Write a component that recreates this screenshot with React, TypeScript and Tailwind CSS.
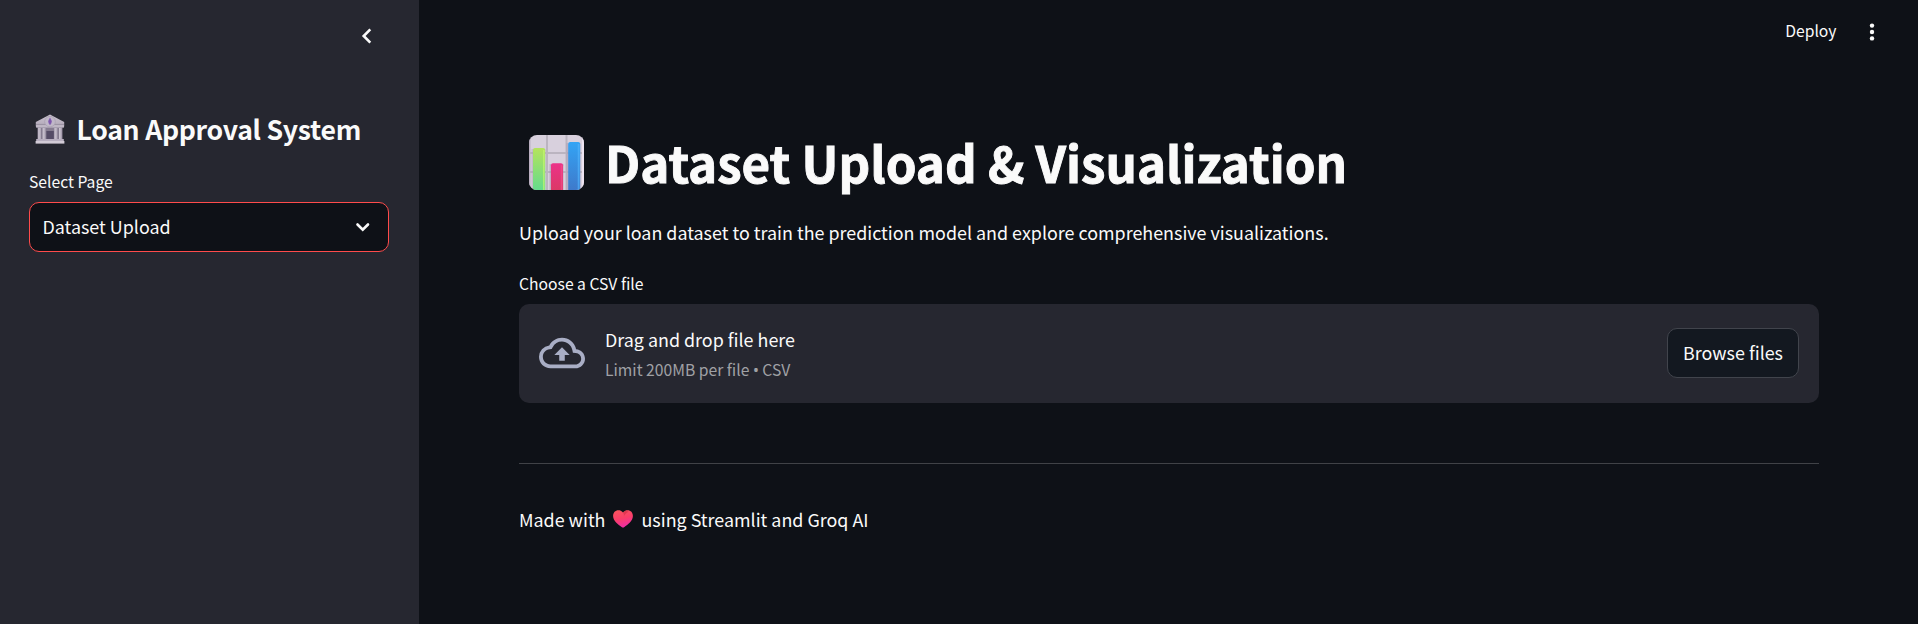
function BankIcon() {
  return (
    <svg className="block h-[30px] w-[30px] shrink-0" viewBox="0 0 30 30">
      <defs>
        <linearGradient id="bankRoof" x1="0" y1="0" x2="0" y2="1">
          <stop offset="0" stopColor="#c9c1ce" />
          <stop offset="1" stopColor="#b3aaba" />
        </linearGradient>
        <linearGradient id="bankColumn" x1="0" y1="0" x2="1" y2="0">
          <stop offset="0" stopColor="#cfc8d4" />
          <stop offset="1" stopColor="#aca3b4" />
        </linearGradient>
      </defs>
      <rect x="2.5" y="13" width="25" height="13" fill="#857c90" />
      <path d="M15 .6 29.2 8v4.4H.8V8z" fill="url(#bankRoof)" />
      <path d="M1 10.4h28" stroke="#8d8497" strokeWidth=".7" />
      <rect x="1" y="11.2" width="28" height="2.4" fill="#bfb7c5" />
      <rect x="11.4" y="17" width="7.4" height="9" fill="#554c66" />
      <g fill="url(#bankColumn)">
        <rect x="3.2" y="14" width="2.8" height="11.5" />
        <rect x="7.6" y="14" width="3" height="11.5" />
        <rect x="19.4" y="14" width="3" height="11.5" />
        <rect x="24" y="14" width="2.8" height="11.5" />
      </g>
      <rect x="1.2" y="25" width="27.6" height="2.4" fill="#b7aebf" />
      <rect x=".6" y="27" width="28.8" height="2.6" fill="#d2cbd6" />
      <circle cx="15" cy="7.6" r="5.3" fill="#c0b8c8" stroke="#a29aab" strokeWidth=".6" />
      <ellipse cx="15" cy="7.4" rx="1.8" ry="2.5" fill="#8560b4" />
      <path d="M15 3.9v7" stroke="#7650a8" strokeWidth="1" />
    </svg>
  );
}

function ChartIcon() {
  return (
    <svg className="block h-[55px] w-[55px] shrink-0" viewBox="0 0 55 55">
      <defs>
        <linearGradient id="barGreen" x1="0" y1="0" x2="0" y2="1">
          <stop offset="0" stopColor="#b5e35c" />
          <stop offset="1" stopColor="#5fdb90" />
        </linearGradient>
        <linearGradient id="barPink" x1="0" y1="0" x2="0" y2="1">
          <stop offset="0" stopColor="#ec3289" />
          <stop offset="1" stopColor="#d93a62" />
        </linearGradient>
        <linearGradient id="barBlue" x1="0" y1="0" x2="0" y2="1">
          <stop offset="0" stopColor="#33a4f5" />
          <stop offset="1" stopColor="#3f78c9" />
        </linearGradient>
        <clipPath id="chartFrame">
          <rect width="55" height="55" rx="8" />
        </clipPath>
      </defs>
      <g clipPath="url(#chartFrame)">
        <rect width="55" height="55" fill="#d8d0dd" />
        <path d="M18 0v55M37.5 0v55M0 18h55M0 37h55" stroke="#bbb4c0" strokeWidth="2" />
        <path d="M.7 0v55" stroke="#b9aebf" strokeWidth="1.5" />
        <path d="M54 0v55" stroke="#eee4f1" strokeWidth="2" />
        <rect x="2.5" y="14" width="14" height="44" fill="#a99bb0" opacity=".4" />
        <rect x="20.5" y="29" width="14" height="29" fill="#a58cac" opacity=".5" />
        <rect x="37.5" y="8" width="14" height="50" fill="#a091b0" opacity=".4" />
        <rect x="4" y="13" width="12.2" height="45" rx="2" fill="url(#barGreen)" />
        <path d="M14.8 15v40" stroke="#c3f76e" strokeWidth="1.6" opacity=".7" />
        <rect x="22" y="28.2" width="12" height="30" rx="2" fill="url(#barPink)" />
        <path d="M32.6 30v25" stroke="#f0508b" strokeWidth="1.8" opacity=".7" />
        <rect x="39.2" y="7" width="12" height="50" rx="2" fill="url(#barBlue)" />
        <path d="M49.6 9v46" stroke="#51b3fb" strokeWidth="1.8" opacity=".7" />
      </g>
    </svg>
  );
}

function HeartIcon() {
  return (
    <svg className="block h-[18px] w-[20px] shrink-0" viewBox="0 0 20 18">
      <defs>
        <linearGradient id="heartFill" x1="0.2" y1="0" x2="0.5" y2="1">
          <stop offset="0" stopColor="#f9545e" />
          <stop offset=".5" stopColor="#fa3e69" />
          <stop offset="1" stopColor="#ee2da6" />
        </linearGradient>
      </defs>
      <path
        d="M10 2.5C8.6.9 7 .3 5.4.3 2.3.3.1 2.7.1 5.9c0 5 5.2 8.6 8.5 11.1.9.7 1.9.7 2.8 0 3.3-2.5 8.5-6.1 8.5-11.1C19.9 2.7 17.7.3 14.6.3 13 .3 11.4.9 10 2.5z"
        fill="url(#heartFill)"
      />
      <path d="M10 2.5c1.2 1.7 1.2 3 .6 4.2C11.5 5 13 3 15.5 1.8 13.5.3 11.4.9 10 2.5z" fill="#d02c45" opacity=".6" />
    </svg>
  );
}

function Sidebar() {
  return (
    <aside className="flex w-[419px] shrink-0 flex-col bg-[#262730] px-[29px]">
      <div className="flex h-[72px] items-center justify-end pr-[13px]">
        <svg className="block h-5 w-5" viewBox="0 0 20 20" fill="none" stroke="#fafafa" strokeWidth="2.6">
          <path d="M13.3 3.3 6.7 10l6.6 6.7" />
        </svg>
      </div>
      <h2 className="mt-[37px] flex h-10 items-center whitespace-nowrap pl-[5.5px] text-[26.6px] font-semibold leading-10 tracking-[-0.28px]">
        <BankIcon />
        <span className="ml-3">Loan Approval System</span>
      </h2>
      <label className="mt-[21px] h-6 text-[15.7px] leading-6">Select Page</label>
      <div className="mt-2 flex h-[50px] w-[360px] items-center justify-between rounded-[10px] border border-[#ff4b4b] bg-[#0e1117] pl-[12.5px] pr-[15px] text-[17.9px] leading-[30px]">
        <span className="pb-0.5">Dataset Upload</span>
        <svg className="block h-5 w-5" viewBox="0 0 20 20" fill="none" stroke="#fafafa" strokeWidth="2.6" strokeLinecap="round">
          <path d="m4.5 7.5 5.25 5.25L15 7.5" />
        </svg>
      </div>
    </aside>
  );
}

function Uploader() {
  return (
    <section className="mt-2 flex h-[99px] items-center rounded-[10px] bg-[#262730] px-5">
      <svg className="mb-px block h-[46px] w-[46px] shrink-0" viewBox="0 0 24 24" fill="#a9aec5">
        <path d="M19.35 10.04A7.49 7.49 0 0 0 12 4C9.11 4 6.6 5.64 5.35 8.04A5.994 5.994 0 0 0 0 14c0 3.31 2.69 6 6 6h13c2.76 0 5-2.24 5-5 0-2.64-2.05-4.78-4.65-4.96zM19 18H6c-2.21 0-4-1.79-4-4 0-2.05 1.53-3.76 3.56-3.97l1.07-.11.5-.95A5.469 5.469 0 0 1 12 6c2.62 0 4.88 1.86 5.39 4.43l.3 1.5 1.53.11A2.98 2.98 0 0 1 22 15c0 1.65-1.35 3-3 3zM8 13h2.55v3h2.9v-3H16l-4-4z" />
      </svg>
      <div className="ml-5 flex flex-1 flex-col gap-[5px]">
        <span className="h-7 text-[17.9px] leading-7">Drag and drop file here</span>
        <span className="h-6 text-[15.7px] leading-6 text-[#a0a1a5]">
          Limit 200MB per file <span className="font-['Noto_Sans'] leading-none">•</span> CSV
        </span>
      </div>
      <button className="mb-px flex h-[50px] w-[132px] items-center justify-center rounded-[10px] border border-[#41444c] bg-[#131820] pb-0.5 text-[17.9px] leading-[30px]">
        Browse files
      </button>
    </section>
  );
}

export default function App() {
  return (
    <div className="flex h-[624px] w-[1918px] overflow-hidden bg-[#0e1117] font-['Noto_Sans_CJK_SC',sans-serif] text-[#fafafa]">
      <Sidebar />
      <main className="flex flex-1 flex-col">
        <header className="flex h-[60px] items-center justify-end pr-[41.5px] text-[15.7px]">
          <span className="pt-0.5 leading-6">Deploy</span>
          <svg className="ml-[30px] mt-[3px] block h-[18px] w-[10px]" viewBox="0 0 10 18" fill="#fafafa">
            <circle cx="5" cy="2.6" r="2.2" />
            <circle cx="5" cy="9" r="2.2" />
            <circle cx="5" cy="15.4" r="2.2" />
          </svg>
        </header>
        <div className="flex flex-col pl-[100px] pr-[99px]">
          <h1 className="mt-[69px] flex h-[66px] items-center whitespace-nowrap pl-[10px] text-[49.3px] font-bold leading-[66px]">
            <ChartIcon />
            <span className="ml-[21px] [-webkit-text-stroke:0.9px_#fafafa]">Dataset Upload &amp; Visualization</span>
          </h1>
          <p className="mt-[21px] h-8 text-[17.9px] leading-8">
            Upload your loan dataset to train the prediction model and explore comprehensive visualizations.
          </p>
          <label className="mt-6 h-6 text-[15.7px] leading-6">Choose a CSV file</label>
          <Uploader />
          <hr className="mt-[60px] h-px border-0 bg-[#404247]" />
          <p className="mt-[39px] flex h-8 items-center text-[17.9px] leading-8">
            <span>Made with</span>
            <span className="mx-2">
              <HeartIcon />
            </span>
            <span>using Streamlit and Groq AI</span>
          </p>
        </div>
      </main>
    </div>
  );
}
